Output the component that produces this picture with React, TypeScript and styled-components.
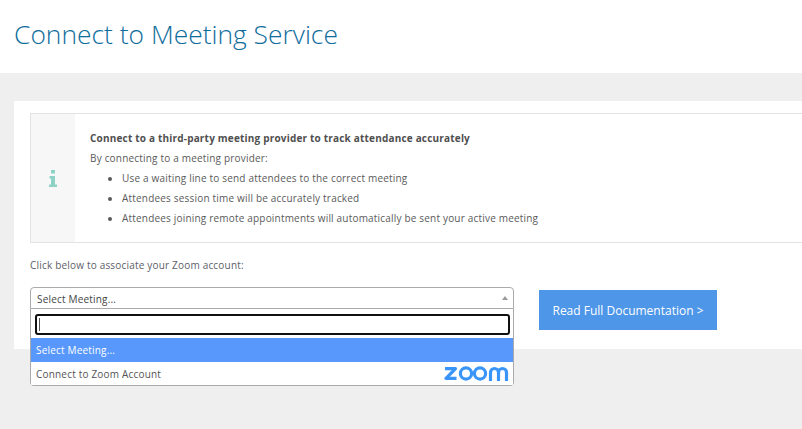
import React from "react";
import styled, { createGlobalStyle } from "styled-components";

const GlobalStyles = createGlobalStyle`
  html, body {
    margin: 0;
    padding: 0;
    height: 100%;
    overflow: hidden;
    background: #eeeeee;
    font-family: "Open Sans", "Liberation Sans", sans-serif;
  }
`;

const Page = styled.div`
  width: 802px;
  height: 429px;
  overflow: hidden;
  background: #efefef;
`;

const Header = styled.header`
  height: 73px;
  background: #ffffff;
  padding: 14px 0 0 14px;
  box-sizing: border-box;
`;

const Title = styled.h1`
  margin: 0;
  font-size: 26.4px;
  line-height: 40px;
  font-weight: 300;
  color: #0f6d9c;
`;

const Main = styled.main`
  padding: 28px 0 0 14px;
`;

const Card = styled.section`
  width: 900px;
  height: 248px;
  box-sizing: border-box;
  padding: 12px 16px;
  background: #ffffff;
  letter-spacing: 0.19px;
`;

const InfoBox = styled.div`
  display: flex;
  height: 130px;
  box-sizing: border-box;
  border: 1px solid #e3e3e3;
`;

const InfoIconCell = styled.div`
  flex: 0 0 44px;
  display: flex;
  align-items: center;
  justify-content: center;
  background: #f7f7f7;
`;

const InfoBody = styled.div`
  padding: 14px 15px 0;
  font-size: 10px;
  line-height: 20px;
  color: #5a5a5a;
`;

const InfoTitle = styled.div`
  font-weight: 700;
  color: #4f4f4f;
`;

const BulletList = styled.ul`
  margin: 0;
  padding: 0 0 0 32px;
`;

const AssociateLabel = styled.p`
  margin: 0;
  padding-top: 12px;
  font-size: 10px;
  line-height: 20px;
  color: #5d5d68;
`;

const ControlRow = styled.div`
  display: flex;
  align-items: flex-start;
  gap: 25px;
  margin-top: 12px;
`;

const SelectWrap = styled.div`
  position: relative;
  width: 484px;
`;

const SelectBox = styled.div`
  display: flex;
  align-items: center;
  justify-content: space-between;
  height: 22px;
  box-sizing: border-box;
  padding: 2px 5px 0 6px;
  border: 1px solid #aaaaaa;
  border-radius: 4px 4px 0 0;
  background: #ffffff;
  font-size: 10px;
  color: #444444;
`;

const Caret = styled.span`
  width: 0;
  height: 0;
  margin-top: -2px;
  border-left: 3px solid transparent;
  border-right: 3px solid transparent;
  border-bottom: 4px solid #9a9a9a;
`;

const Dropdown = styled.div`
  position: absolute;
  top: 22px;
  left: 0;
  right: 0;
  box-sizing: border-box;
  height: 77px;
  border: 1px solid #aaaaaa;
  border-top: none;
  border-radius: 0 0 4px 4px;
  background: #ffffff;
`;

const SearchRow = styled.div`
  padding: 5px 3px 3px 4px;
`;

const SearchCaret = styled.div`
  width: 1px;
  height: 13px;
  background: #555555;
`;

const SearchInput = styled.div`
  display: flex;
  align-items: center;
  height: 21px;
  box-sizing: border-box;
  padding-left: 2px;
  border: 2px solid #101010;
  border-radius: 3px;
`;

const Option = styled.div<{ $active?: boolean }>`
  display: flex;
  align-items: center;
  justify-content: space-between;
  height: ${p => (p.$active ? 24 : 23)}px;
  padding: 0 4px 0 5px;
  font-size: 10px;
  background: ${p => (p.$active ? "#5897fb" : "#ffffff")};
  color: ${p => (p.$active ? "#ffffff" : "#555555")};
`;

const DocsButton = styled.a`
  display: flex;
  align-items: center;
  justify-content: center;
  width: 178px;
  height: 40px;
  margin-top: 3px;
  background: #4d96e8;
  color: #ffffff;
  font-size: 12px;
  letter-spacing: 0;
  text-decoration: none;
`;

const InfoIcon = () => (
  <svg width="8" height="17" viewBox="0 0 8 17" aria-hidden="true">
    <path d="M2 0h4v3.500H2z M0.500 6h5.500v8.500H8V17H0v-2.500h2V8.500H0.500z" fill="#8ed2c5" />
  </svg>
);

const ZoomLogo = () => (
  <svg width="65" height="17" viewBox="0 0 65 17" aria-hidden="true">
    <g fill="none" stroke="#3a95f8" strokeWidth="3.200">
      <path d="M1 3.600h10.500L2 13.400h10.500" strokeLinejoin="round" />
      <circle cx="22" cy="8.500" r="5.600" />
      <circle cx="36" cy="8.500" r="5.600" />
      <path d="M46.500 16V7.500a4 4 0 0 1 8 0V16M54.500 7.500a4 4 0 0 1 8 0V16" />
    </g>
  </svg>
);

const bullets = [
  "Use a waiting line to send attendees to the correct meeting",
  "Attendees session time will be accurately tracked",
  "Attendees joining remote appointments will automatically be sent your active meeting"
];

export default function App() {
  return (
    <Page>
      <GlobalStyles />
      <Header>
        <Title>Connect to Meeting Service</Title>
      </Header>
      <Main>
        <Card>
          <InfoBox>
            <InfoIconCell>
              <InfoIcon />
            </InfoIconCell>
            <InfoBody>
              <InfoTitle>Connect to a third-party meeting provider to track attendance accurately</InfoTitle>
              <div>By connecting to a meeting provider:</div>
              <BulletList>
                {bullets.map(b => <li key={b}>{b}</li>)}
              </BulletList>
            </InfoBody>
          </InfoBox>
          <AssociateLabel>Click below to associate your Zoom account:</AssociateLabel>
          <ControlRow>
            <SelectWrap>
              <SelectBox>
                Select Meeting...
                <Caret />
              </SelectBox>
              <Dropdown>
                <SearchRow>
                  <SearchInput><SearchCaret /></SearchInput>
                </SearchRow>
                <Option $active>Select Meeting...</Option>
                <Option>
                  Connect to Zoom Account
                  <ZoomLogo />
                </Option>
              </Dropdown>
            </SelectWrap>
            <DocsButton href="#">Read Full Documentation &gt;</DocsButton>
          </ControlRow>
        </Card>
      </Main>
    </Page>
  );
}
